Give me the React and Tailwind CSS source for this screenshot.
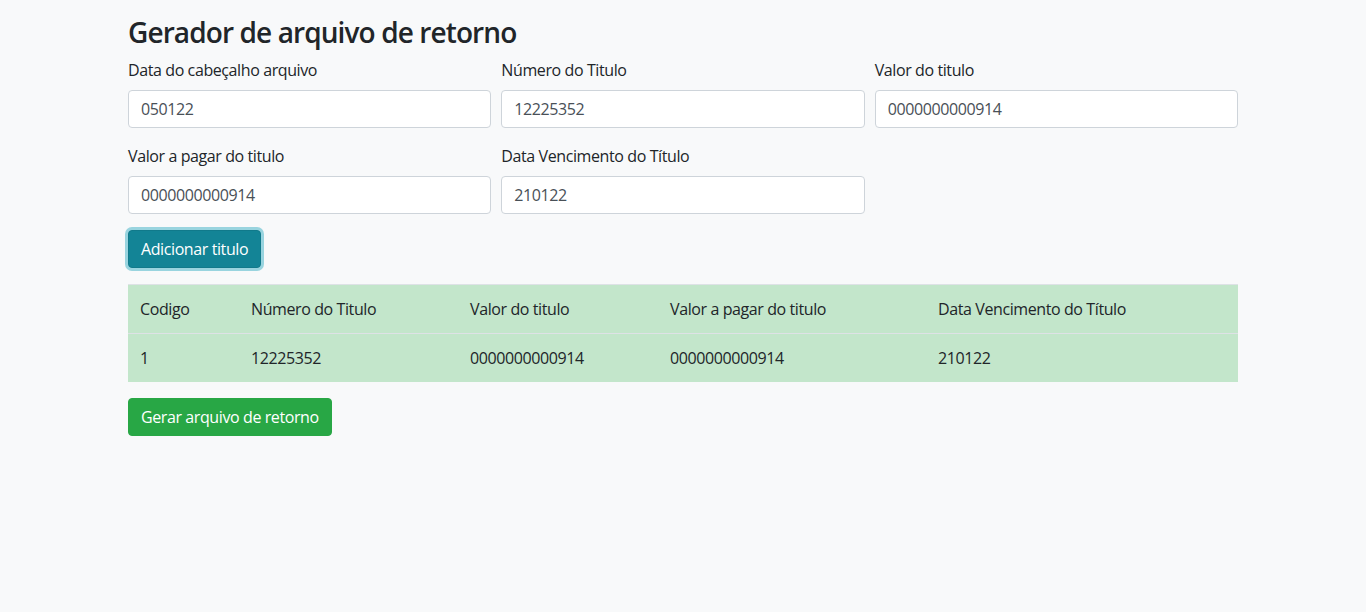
import { useState } from "react";

const font = { fontFamily: '"Open Sans", "Noto Sans", sans-serif' };

function Field({ label, value }) {
  return (
    <div className="w-1/3 px-[5px] mb-4">
      <label className="block mb-2 text-base leading-6 text-[#212529]">{label}</label>
      <input
        className="block w-full h-[38px] px-3 py-1.5 text-base leading-6 tracking-[-0.025em] text-[#495057] bg-white border border-[#ced4da] rounded"
        defaultValue={value}
      />
    </div>
  );
}

export default function App() {
  const [rows] = useState([
    { codigo: "1", numero: "12225352", valor: "0000000000914", pagar: "0000000000914", venc: "210122" },
  ]);

  return (
    <div className="min-h-[612px] bg-[#f8f9fa] text-[#212529] tracking-[-0.025em]" style={font}>
      <div className="w-[1140px] mx-auto px-[15px] pt-4">
        <h3 className="text-[28px] leading-[1.2] font-semibold tracking-[-0.032em] mb-2">Gerador de arquivo de retorno</h3>

        <div className="flex flex-wrap -mx-[5px]">
          <Field label="Data do cabeçalho arquivo" value="050122" />
          <Field label="Número do Titulo" value="12225352" />
          <Field label="Valor do titulo" value="0000000000914" />
          <Field label="Valor a pagar do titulo" value="0000000000914" />
          <Field label="Data Vencimento do Título" value="210122" />
        </div>

        <button className="h-[38px] px-3 text-base leading-6 tracking-[-0.025em] text-white bg-[#138496] border border-[#117a8b] rounded shadow-[0_0_0_3px_rgba(58,176,195,0.5)] mb-4">
          Adicionar titulo
        </button>

        <table className="w-full mb-4 table-fixed border-collapse bg-[#c3e6cb] text-base leading-6">
          <colgroup>
            <col className="w-[111px]" />
            <col className="w-[219px]" />
            <col className="w-[200px]" />
            <col className="w-[268px]" />
            <col />
          </colgroup>
          <tbody>
            <tr>
              <td className="p-3 border-t border-[#dee2e6] text-left">Codigo</td>
              <td className="p-3 border-t border-[#dee2e6]">Número do Titulo</td>
              <td className="p-3 border-t border-[#dee2e6]">Valor do titulo</td>
              <td className="p-3 border-t border-[#dee2e6]">Valor a pagar do titulo</td>
              <td className="p-3 border-t border-[#dee2e6]">Data Vencimento do Título</td>
            </tr>
            {rows.map(r => (
              <tr key={r.codigo}>
                <td className="p-3 border-t border-[#dee2e6]">{r.codigo}</td>
                <td className="p-3 border-t border-[#dee2e6]">{r.numero}</td>
                <td className="p-3 border-t border-[#dee2e6]">{r.valor}</td>
                <td className="p-3 border-t border-[#dee2e6]">{r.pagar}</td>
                <td className="p-3 border-t border-[#dee2e6]">{r.venc}</td>
              </tr>
            ))}
          </tbody>
        </table>

        <button className="h-[38px] px-3 text-base leading-6 tracking-[-0.025em] text-white bg-[#28a745] border border-[#28a745] rounded">
          Gerar arquivo de retorno
        </button>
      </div>
    </div>
  );
}
